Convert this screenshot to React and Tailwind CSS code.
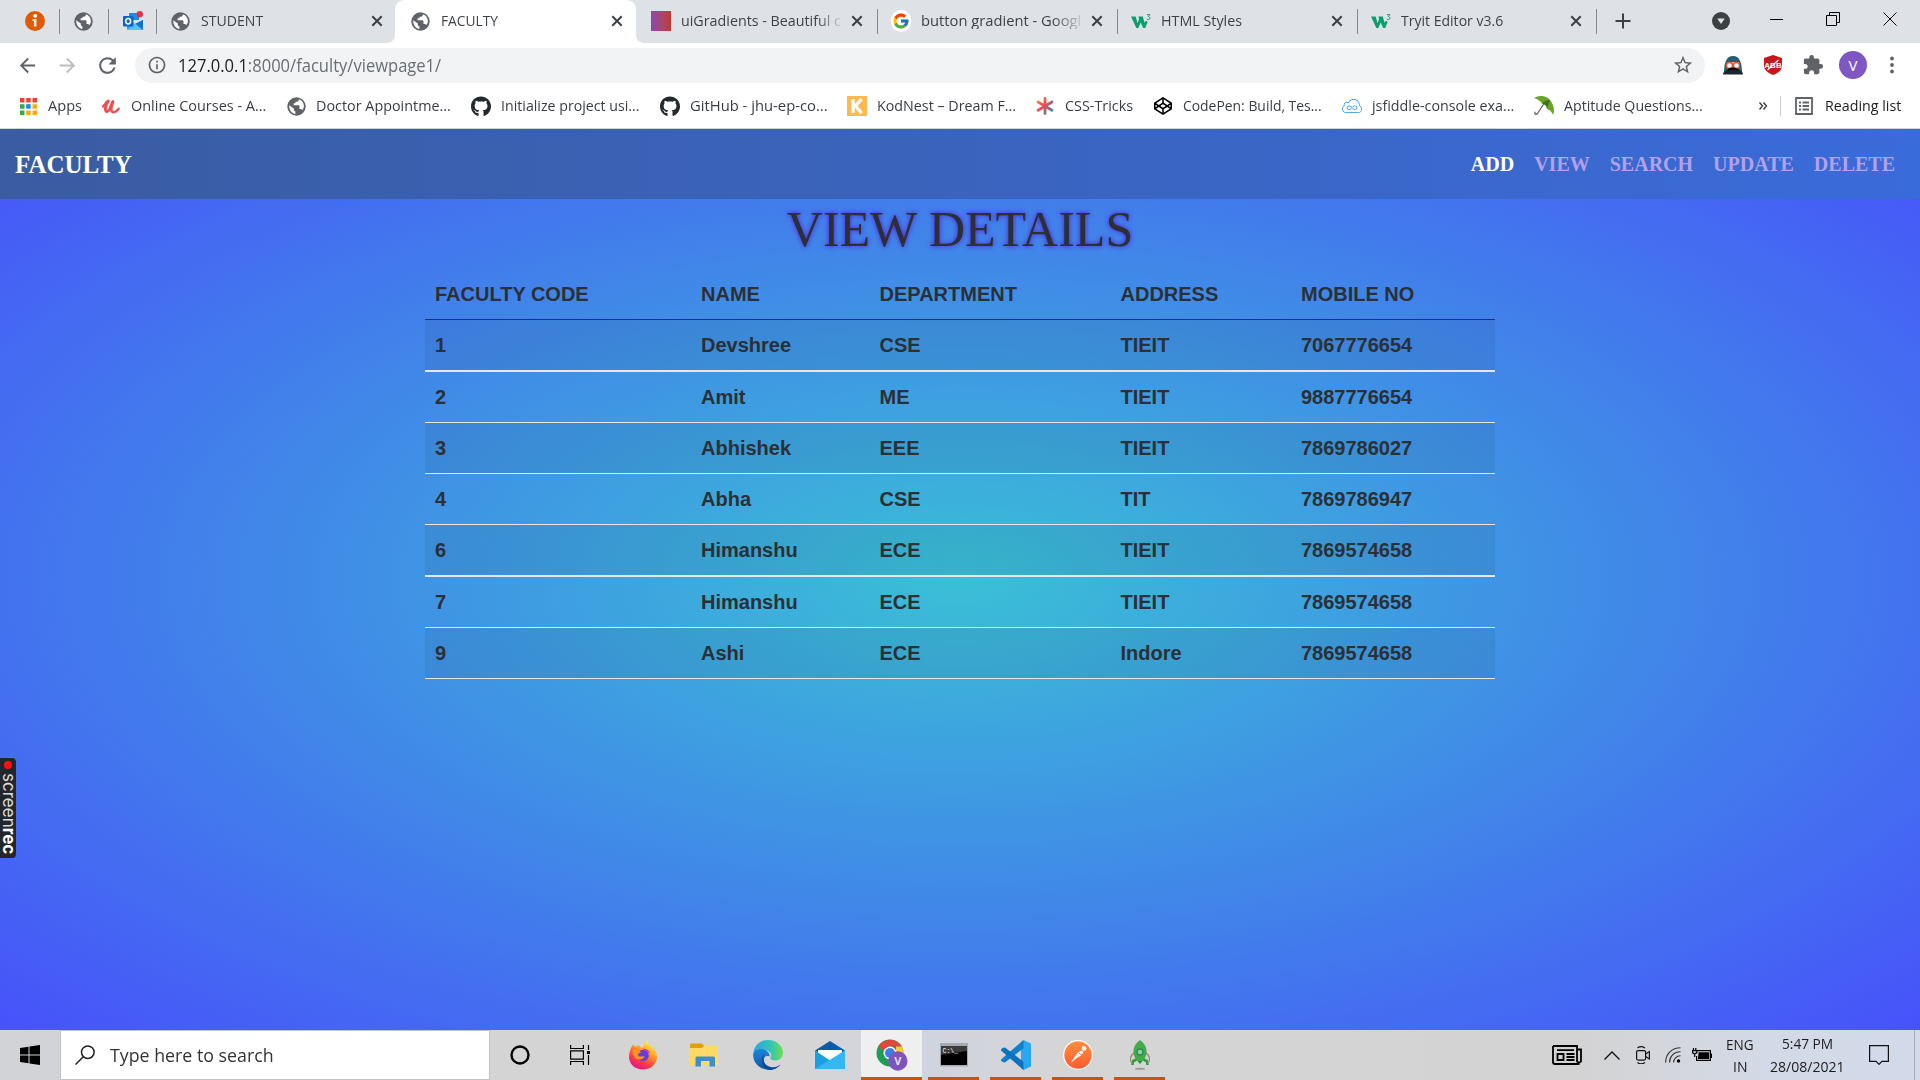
import React, { useLayoutEffect, useRef } from "react";
import { MdExtension, MdStarBorder, MdRefresh, MdArrowBack, MdArrowForward, MdInfoOutline } from "react-icons/md";
import { FcGoogle } from "react-icons/fc";
import { FaGithub, FaCodepen } from "react-icons/fa";
import { SiJsfiddle } from "react-icons/si";

const UI = "font-['Segoe_UI','Open_Sans','Noto_Sans',sans-serif]";

/* One line of text, condensed or widened to fill the width of its box. */
function Fit({ className = "", children }) {
  const outer = useRef(null);
  const inner = useRef(null);
  useLayoutEffect(() => {
    const s = outer.current.clientWidth / inner.current.offsetWidth;
    inner.current.style.transform = `scaleX(${s})`;
  }, []);
  return (
    <span ref={outer} className={`block shrink-0 whitespace-nowrap ${className}`}>
      <span ref={inner} className="inline-block origin-left">{children}</span>
    </span>
  );
}

const Globe = ({ className = "" }) => (
  <svg viewBox="0 0 21 21" className={`h-[21px] w-[21px] shrink-0 ${className}`}>
    <circle cx="10.500" cy="10.500" r="9.200" fill="#5f6368" />
    <path d="M3.200 9.300l4.600 3.200v1.200c0 .9.700 1.500 1.600 1.500v2.900C5.800 17.500 3 14.200 3.200 9.300z" fill="#fff" />
    <path d="M12.800 3.200c.2 1.700-.6 2.500-2 2.500H9.500v1.600H7.600v2h4.700c.8 0 1.200.5 1.200 1.200v2.600h1c.8 0 1.400.5 1.600 1.200 1.200-1.200 1.800-2.500 1.800-4.200 0-3.200-2-5.900-5.100-6.900z" fill="#fff" />
  </svg>
);
const Sep = ({ className = "" }) => <i className={`block h-[25px] w-px shrink-0 bg-[#85888c] ${className}`} />;

const Close = ({ className = "" }) => (
  <svg viewBox="0 0 12 12" className={`h-3 w-3 shrink-0 ${className}`} fill="none" stroke="#3c4043" strokeWidth="2">
    <path d="M1.3 1.3l9.4 9.4M10.7 1.3l-9.4 9.4" />
  </svg>
);

const W3 = ({ className = "" }) => (
  <svg viewBox="0 0 20 20" className={`h-5 w-5 shrink-0 ${className}`} fill="none">
    <path d="M0 5.500h4.600l2 6.500 1.500-4-.8-2.500h4.400l2 6.500 1-2.200 2 1.200L14.200 17h-2L9.700 11.500 7.300 17h-2z" fill="#0aa06e" />
    <path d="M16 3.600h2.900l-1.500 1.900c2 .2 2 3.100-.1 3.100-.7 0-1.200-.3-1.500-.8" stroke="#0aa06e" strokeWidth="1" />
  </svg>
);

const Info = ({ className = "" }) => (
  <svg viewBox="0 0 20 20" className={`h-5 w-5 shrink-0 ${className}`}>
    <circle cx="10" cy="10" r="10" fill="#dd5a06" />
    <circle cx="10.200" cy="4.800" r="1.900" fill="#fff" />
    <path d="M7.500 8h4v7.600h-2.600v-5.700H7.500z" fill="#fbe3d0" />
  </svg>
);

const Outlook = ({ className = "" }) => (
  <svg viewBox="0 0 20 20" className={`h-5 w-5 shrink-0 ${className}`}>
    <path d="M6 2h10v7H6z" fill="#1490df" />
    <path d="M4 9l8 4 8-4v9a1 1 0 0 1-1 1H5a1 1 0 0 1-1-1z" fill="#28a8ea" />
    <path d="M12 13l8-4v10h-5z" fill="#1273c5" />
    <path d="M4 19l8-6.500 8 6.500z" fill="#50c8f5" />
    <rect y="5" width="10.500" height="10.500" rx="1" fill="#0a66c2" />
    <ellipse cx="5.200" cy="10.300" rx="2.400" ry="2.700" fill="none" stroke="#fff" strokeWidth="1.500" />
    <circle cx="16.800" cy="3.300" r="3.300" fill="#dc3545" />
  </svg>
);

function TabStrip() {
  return (
    <div className="flex h-[43px] items-center bg-[#dee1e6] pb-px text-[15px] leading-[18px] text-[#3f4347]">
      <Info className="ml-[25px]" />
      <Sep className="ml-[14px]" />
      <Globe className="ml-[13px]" />
      <Sep className="ml-[14px]" />
      <Outlook className="ml-[14px]" />
      <Sep className="ml-[13px]" />
      <Globe className="ml-[13px]" />
      <Fit className="mb-[2px] ml-[10px] w-[62px]">STUDENT</Fit>
      <Close className="ml-[108px]" />
      <div className="-mb-px ml-[4px] flex h-[43px] items-end">
        <div className="h-[10px] w-[8px] bg-white"><div className="h-full w-full rounded-br-[8px] bg-[#dee1e6]" /></div>
        <div className="flex h-[43px] w-[241px] items-center rounded-t-[9px] bg-white pb-px">
          <Globe className="ml-[15px]" />
          <Fit className="mb-[2px] ml-[10px] w-[57px]">FACULTY</Fit>
          <Close className="ml-[113px]" />
        </div>
        <div className="h-[10px] w-[8px] bg-white"><div className="h-full w-full rounded-bl-[8px] bg-[#dee1e6]" /></div>
      </div>
      <i className="ml-[7px] block h-5 w-5 bg-gradient-to-r from-[#8e44ad] to-[#c0392b]" />
      <Fit className="mb-[2px] ml-[10px] w-[160px] [mask-image:linear-gradient(90deg,#000_85%,transparent_102%)]">uiGradients - Beautiful c</Fit>
      <Close className="ml-[10px]" />
      <Sep className="ml-[14px]" />
      <i className="ml-[13px] flex h-[22px] w-[20px] items-center justify-center rounded-full bg-white"><FcGoogle className="h-[18px] w-[18px]" /></i>
      <Fit className="mb-[2px] ml-[10px] w-[160px] [mask-image:linear-gradient(90deg,#000_82%,transparent_103%)]">button gradient - Googl</Fit>
      <Close className="ml-[10px]" />
      <Sep className="ml-[14px]" />
      <W3 className="ml-[13px]" />
      <Fit className="mb-[2px] ml-[10px] w-[81px]">HTML Styles</Fit>
      <Close className="ml-[89px]" />
      <Sep className="ml-[14px]" />
      <W3 className="ml-[13px]" />
      <Fit className="mb-[2px] ml-[10px] w-[102px]">Tryit Editor v3.6</Fit>
      <Close className="ml-[67px]" />
      <Sep className="ml-[14px]" />
      <svg viewBox="0 0 16 16" className="ml-[18px] h-4 w-4 shrink-0" stroke="#3c4043" strokeWidth="2"><path d="M8 .5v15M.5 8h15" /></svg>
      <svg viewBox="0 0 18 18" className="ml-[81px] h-[18px] w-[18px] shrink-0"><circle cx="9" cy="9" r="9" fill="#3c4043" /><path d="M5.300 6.500h7.400L9 12z" fill="#dee1e6" /></svg>
      <svg viewBox="0 0 128 14" className="mb-[5px] ml-[40px] h-[14px] w-[128px] shrink-0" fill="none" stroke="#000" strokeWidth="1">
        <path d="M0 7.500h13M56.500 3.500h10v10h-10zM59.500 3.500v-3h10v10h-3" />
        <path d="M113.500.5l13 13M126.500.5l-13 13" />
      </svg>
    </div>
  );
}

function AddressBar() {
  return (
    <div className="flex h-[44px] items-center bg-white pl-[16px]">
      <MdArrowBack className="h-[23px] w-[23px] text-[#5f6368]" />
      <MdArrowForward className="ml-[17px] h-[23px] w-[23px] text-[#bbbdbf]" />
      <MdRefresh className="ml-[16px] h-[25px] w-[25px] text-[#5f6368]" />
      <div className="ml-[15px] flex h-[35px] w-[1570px] items-center rounded-full bg-[#f1f3f4]">
        <MdInfoOutline className="ml-[12px] h-5 w-5 text-[#5f6368]" />
        <Fit className="ml-[11px] w-[263px] text-[17.500px] leading-6 text-[#6a6e73]"><span className="text-[#202124]">127.0.0.1</span>:8000/faculty/viewpage1/</Fit>
        <MdStarBorder className="ml-[1231px] h-[22px] w-[22px] text-[#5f6368]" />
      </div>
      <svg viewBox="0 0 20 20" className="ml-[18px] h-5 w-5 shrink-0">
        <path d="M1 19C1 8 3 1 10 1s9 7 9 18z" fill="#23606f" />
        <path d="M0 19.500c0-3 3-5.500 10-5.500s10 2.500 10 5.500z" fill="#1c2731" />
        <path d="M4 7h12v5H4z" fill="#e9b59b" />
        <circle cx="6.500" cy="10.500" r="3" fill="#fff" stroke="#e2553c" strokeWidth="1.400" />
        <circle cx="13.500" cy="10.500" r="3" fill="#fff" stroke="#e2553c" strokeWidth="1.400" />
        <path d="M5 15c2-2 8-2 10 0" stroke="#000" strokeWidth="1.800" fill="none" />
      </svg>
      <svg viewBox="0 0 20 20" className="ml-[20px] h-5 w-5 shrink-0">
        <path d="M10 0l9 3v8c0 4-4 7-9 9-5-2-9-5-9-9V3z" fill="#c8161d" />
        <text x="10" y="12.800" textAnchor="middle" fontSize="8" fontWeight="bold" fontFamily="Liberation Sans" fill="#fff">ABB</text>
        <path d="M4.500 15L15.500 5" stroke="#fff" strokeWidth="1.200" />
      </svg>
      <MdExtension className="ml-[19px] h-[22px] w-[22px] text-[#5f6368]" />
      <div className="ml-[15px] flex h-[28px] w-[28px] items-center justify-center rounded-full bg-[#7e57c2] text-[15px] text-white">V</div>
      <svg viewBox="0 0 4 18" className="ml-[23px] h-[18px] w-[4px] shrink-0" fill="#5f6368"><circle cx="2" cy="2.500" r="1.900" /><circle cx="2" cy="9" r="1.900" /><circle cx="2" cy="15.500" r="1.900" /></svg>
    </div>
  );
}

const AppsGrid = () => (
  <svg viewBox="0 0 17 17" className="h-[17px] w-[17px]">
    <path d="M0 0h4.500v4.500H0zM6.200 0h4.500v4.500H6.200zM12.500 0H17v4.500h-4.500z" fill="#ea4335" />
    <path d="M0 6.200h4.500v4.500H0zM0 12.500h4.500V17H0z" fill="#34a853" />
    <path d="M6.200 6.200h4.500v4.500H6.200z" fill="#1a87f0" />
    <path d="M6.200 12.500h4.500V17H6.200zM12.500 12.500H17V17h-4.500zM12.500 6.200H17v4.500h-4.500z" fill="#fbab09" />
  </svg>
);
const Udemy = () => (
  <svg viewBox="0 0 20 16" className="h-[15px] w-[18px]" fill="none" stroke="#ea5252" strokeLinecap="round">
    <path d="M7 2C5 5 3.500 8.500 3.800 11.500c.4 3 3.200 2.500 5.200-1.500L12 2.500" strokeWidth="3.300" />
    <path d="M1 8c1.500-1 3-3 4-5M12.300 3c-1.500 4-3 8-1.300 10.500 1.500 1.800 5 .5 7.500-3" strokeWidth="2.700" />
  </svg>
);
const KodNest = () => (
  <svg viewBox="0 0 20 20" className="h-5 w-5"><path d="M0 0h20v20H0z" fill="#fdb94e" /><path d="M6 3v14M14.500 3L8.500 10l6 7" fill="none" stroke="#fff" strokeWidth="3.400" /></svg>
);
const CssTricks = () => (
  <svg viewBox="0 0 18 18" className="h-[18px] w-[18px]" strokeWidth="2.8" strokeLinecap="round">
    <defs><linearGradient id="ct" x1="0" y1="0" x2="18" y2="14" gradientUnits="userSpaceOnUse"><stop offset=".1" stopColor="#f58a2c" /><stop offset=".5" stopColor="#ea4c5a" /><stop offset=".75" stopColor="#8b6a86" /><stop offset="1" stopColor="#22a7a0" /></linearGradient></defs>
    <path d="M9 1.500l.01 15M2 5l14 8.200M16 5L2 13.200" stroke="url(#ct)" />
  </svg>
);
const Umbrella = () => (
  <svg viewBox="0 0 20 20" className="h-5 w-5">
    <path d="M11 6L3.500 17.500c-1.500 2-3.500.5-2.200-1.800" fill="none" stroke="#666" strokeWidth="1.300" />
    <path d="M0 2C5-1 12-1 16 4s5 11 3 15c-1-3-3-5-6-6 0-3-2-5-5-5.500C6 4.500 3 3 0 2z" fill="#6aa52b" />
    <path d="M8 7.500C10 5 13 4 16 4c-1 3-2 6-3 9 0-3-2-5-5-5.500z" fill="#3d7415" />
  </svg>
);

const bookmarks = [
  { icon: <AppsGrid />, text: "Apps", gap: "ml-0", w: "w-[34px]" },
  { icon: <Udemy />, text: "Online Courses - A...", gap: "ml-[19px]", w: "w-[135px]" },
  { icon: <Globe />, text: "Doctor Appointme...", gap: "ml-[20px]", w: "w-[135px]" },
  { icon: <FaGithub className="h-[21px] w-[21px] text-[#24292e]" />, text: "Initialize project usi...", gap: "ml-[20px]", w: "w-[139px]" },
  { icon: <FaGithub className="h-[21px] w-[21px] text-[#24292e]" />, text: "GitHub - jhu-ep-co...", gap: "ml-[20px]", w: "w-[138px]" },
  { icon: <KodNest />, text: "KodNest – Dream F...", gap: "ml-[19px]", w: "w-[139px]" },
  { icon: <CssTricks />, text: "CSS-Tricks", gap: "ml-[19px]", w: "w-[68px]" },
  { icon: <FaCodepen className="h-[18px] w-[18px] text-black" />, text: "CodePen: Build, Tes...", gap: "ml-[20px]", w: "w-[139px]" },
  { icon: <SiJsfiddle className="h-5 w-5 text-[#1f8cf0]" />, text: "jsfiddle-console exa...", gap: "ml-[20px]", w: "w-[142px]" },
  { icon: <Umbrella />, text: "Aptitude Questions...", gap: "ml-[20px]", w: "w-[139px]" },
];

function BookmarksBar() {
  return (
    <div className="flex h-[42px] items-center border-b border-[#cfd2d6] bg-white pb-[3px] pl-[18px] text-[15px] leading-[18px] text-[#3a3d41]">
      {bookmarks.map((b) => (
        <div key={b.text} className={`flex shrink-0 items-center ${b.gap}`}>
          <span className="flex h-[22px] w-5 shrink-0 items-center justify-center">{b.icon}</span>
          <Fit className={`mb-[2px] ml-[10px] ${b.w}`}>{b.text}</Fit>
        </div>
      ))}
      <svg viewBox="0 0 8 8" className="ml-[56px] h-2 w-2 shrink-0" fill="none" stroke="#3c4043" strokeWidth="1.400"><path d="M.5.500L3.500 4l-3 3.500M4.500.500l3 3.500-3 3.500" /></svg>
      <i className="ml-[13px] block h-5 w-px shrink-0 bg-[#c9ccd0]" />
      <svg viewBox="0 0 18 18" className="ml-[14px] h-[18px] w-[18px] shrink-0" fill="none" stroke="#5f6368" strokeWidth="1.800"><path d="M1 1h16v16H1zM4 5.500h2M7.500 5.500H14M4 9h2M7.500 9H14M4 12.500h2M7.500 12.500H14" /></svg>
      <Fit className="mb-[2px] ml-[12px] w-[76px] text-[#202124]">Reading list</Fit>
    </div>
  );
}

const rows = [
  ["1", "Devshree", "CSE", "TIEIT", "7067776654"],
  ["2", "Amit", "ME", "TIEIT", "9887776654"],
  ["3", "Abhishek", "EEE", "TIEIT", "7869786027"],
  ["4", "Abha", "CSE", "TIT", "7869786947"],
  ["6", "Himanshu", "ECE", "TIEIT", "7869574658"],
  ["7", "Himanshu", "ECE", "TIEIT", "7869574658"],
  ["9", "Ashi", "ECE", "Indore", "7869574658"],
];
const GRID = "grid grid-cols-[266px_178.500px_241px_180.500px_1fr] *:px-[10px]";

function Page() {
  return (
    <div className="h-[901px] bg-[radial-gradient(ellipse_at_center,#3abfd6_0%,#4752fa_100%)] font-['Liberation_Serif',serif]">
      <nav className="flex h-[70px] items-center bg-gradient-to-r from-[#3a5ca2] to-[#3a6bda] pt-[2px] pl-[15px] font-bold text-white">
        <span className="mr-auto text-[25px]">FACULTY</span>
        <div className="mb-[2px] flex gap-[20px] pr-[25px] text-[20px] text-[#b3a1ea]">
          <span className="text-white">ADD</span>
          <span>VIEW</span>
          <span>SEARCH</span>
          <span>UPDATE</span>
          <span>DELETE</span>
        </div>
      </nav>
      <h1 className="h-[70px] text-center text-[50px] leading-[60px] text-[#2b3035] [text-shadow:0_0_5px_#5a10d8]">VIEW DETAILS</h1>
      <div className="mx-auto w-[1070px] font-['Liberation_Sans',sans-serif] text-[20px] leading-[30px] font-bold text-[#2b3035]">
        <div className={`${GRID} h-[51px] border-b border-[#263347] pt-[10px]`}>
          <span>FACULTY CODE</span><span>NAME</span><span>DEPARTMENT</span><span>ADDRESS</span><span>MOBILE NO</span>
        </div>
        {rows.map((r, i) => (
          <div key={r[0]} className={`${GRID} border-[#e9e4e6] py-[10px] ${i % 4 === 0 ? "border-b-2" : "border-b"} ${i % 2 === 0 ? "bg-black/[.06]" : ""}`}>
            {r.map((c, j) => <span key={j}>{c}</span>)}
          </div>
        ))}
      </div>
    </div>
  );
}

const Firefox = () => (
  <svg viewBox="0 0 30 30" className="h-[30px] w-[30px]">
    <defs>
      <linearGradient id="ff" x1=".8" y1=".1" x2=".3" y2="1"><stop stopColor="#fff044" /><stop offset=".35" stopColor="#ff9a20" /><stop offset=".7" stopColor="#ff3a4a" /><stop offset="1" stopColor="#e0128c" /></linearGradient>
    </defs>
    <path d="M3.500 7c.5-1 1-2 2-2.500.3 1 .7 1.800 1.500 2.500 1-1 2.500-1.500 4-1.500L14 8c2-1 2-5 5-7.500.5 3 3 4 4 6.500l1-1c2.500 2.500 5 6.500 5 11 0 7-6 12.500-14 12.500S1 24 1 17C1 13 2 10 3.500 7z" fill="url(#ff)" />
    <circle cx="15" cy="15.500" r="5.800" fill="#6a3bd6" />
    <path d="M5 10c3-2 6 0 8 2.500-2 .5-4 2-2.500 3.500 2 1.500 4-.5 6 .5-1 3-6 4-9 1.500C5 16 4 13 5 10z" fill="#ff9420" />
    <path d="M14 9c3-1 7 1 8 4l-3-1c-1-2-3-2.500-5-3z" fill="#b833c8" />
  </svg>
);
const Explorer = () => (
  <svg viewBox="0 0 28 24" className="h-[24px] w-[28px]">
    <path d="M0 1.500A1 1 0 0 1 1 .5h11l2 2.500v4H0z" fill="#e2a007" />
    <path d="M0 5h12l2-2h12.500A1.500 1.500 0 0 1 28 4.500V22H0z" fill="#ffd866" />
    <path d="M5.500 23.500V15A1.500 1.500 0 0 1 7 13.500h16.500A1.500 1.500 0 0 1 25 15v8.500h-5.500V18h-8.500v5.500z" fill="#3a8fd0" />
  </svg>
);
const Edge = () => (
  <svg viewBox="0 0 30 30" className="ml-[2px] h-[30px] w-[30px]">
    <defs>
      <linearGradient id="eg" x1="0" y1=".3" x2="1" y2=".3"><stop stopColor="#2aa5e0" /><stop offset=".6" stopColor="#35c5b5" /><stop offset="1" stopColor="#6ae04c" /></linearGradient>
      <linearGradient id="eb" x1="0" y1="0" x2="0" y2="1"><stop stopColor="#1b86d8" /><stop offset="1" stopColor="#1155a8" /></linearGradient>
    </defs>
    <path d="M.5 12C2 4 8 0 15 0c9 0 15 6 15 13 0 5-4 7.500-8 7.500-3.500 0-5.500-1.500-4.500-3 2-2.500 0-6.500-4-7C8 9.500 2 12 .2 16z" fill="url(#eg)" />
    <path d="M.2 15C1 10 6 8 11 9.500c3.500 1 6 4 5.500 7C8 13.500 9 28 19 29.400 9 31.500 0 24 .2 15z" fill="url(#eb)" />
    <path d="M12 13.500c-3 4-2 12 6 13.500 4 .7 7-.7 9.500-2.500-3 4-7 5.500-11 5.500C9 29 6 18 12 13.500z" fill="#0c479c" />
  </svg>
);
const Mail = () => (
  <svg viewBox="0 0 30 28" className="h-[28px] w-[30px]">
    <path d="M0 9.500L15 0l15 9.500-3 2H3z" fill="#0a5cab" />
    <path d="M3 9h24v8l-12 5L3 17z" fill="#fff" />
    <path d="M0 9.500l15 10 15-10V28H0z" fill="#1b9fe4" />
    <path d="M30 9.500V28H0z" fill="#35b8f1" />
  </svg>
);
const ChromeIcon = () => (
  <svg viewBox="0 0 32 32" className="h-[32px] w-[32px]">
    <circle cx="14" cy="14" r="13.500" fill="#1e9e55" />
    <path d="M2.300 7.500A13.500 13.500 0 0 1 25.700 7.500H14a6.500 6.500 0 0 0-6 4.500z" fill="#dd4a3c" />
    <path d="M25.700 7.500A13.500 13.500 0 0 1 14 27.500l6-11V7.500z" fill="#fcc934" />
    <circle cx="14" cy="14" r="6.500" fill="#fff" /><circle cx="14" cy="14" r="5" fill="#3d7de8" />
    <circle cx="21.800" cy="22" r="9.700" fill="#7d55bd" />
    <text x="21.800" y="26" textAnchor="middle" fontSize="11" fontWeight="bold" fontFamily="Open Sans" fill="#e6dcf5">V</text>
  </svg>
);
const Terminal = () => (
  <svg viewBox="0 0 28 24" className="h-[24px] w-[28px]">
    <path d="M0 0h28v23.500H0z" fill="#a6aaae" /><path d="M1 3h26v19H1z" fill="#000" /><path d="M1 3h26v5L1 12z" fill="#3b3b3b" />
    <text x="2.500" y="9.500" fontSize="6.500" fontFamily="Liberation Mono" fill="#fff">C:\_</text>
  </svg>
);
const VSCode = () => (
  <svg viewBox="0 0 30 30" className="h-[30px] w-[30px]">
    <path d="M22.500 0L30 3.500v23L22.500 30 20 28V2z" fill="#29a8f2" />
    <path d="M22.500 0v8.200L4 22.500 1.500 22 0 20.500v-1z" fill="#1080c8" />
    <path d="M22.500 30v-8.200L4 7.500 1.500 8 0 9.500v1z" fill="#0b72bb" />
  </svg>
);
const Postman = () => (
  <svg viewBox="0 0 30 30" className="h-[30px] w-[30px]">
    <defs><linearGradient id="pm" x1="0" y1="0" x2="0" y2="1"><stop stopColor="#ff9040" /><stop offset="1" stopColor="#ff5a30" /></linearGradient></defs>
    <circle cx="15" cy="15" r="14.300" fill="url(#pm)" stroke="#fff" strokeWidth="1.200" />
    <circle cx="21" cy="8.500" r="2.300" fill="#fff" />
    <path d="M18.500 10.500l2 1.500-3 4-2.500 1-7.500 6 5-7.500 2-2.500z" fill="#fff" />
    <path d="M16 13l3 2.500" stroke="#ff6f35" strokeWidth="1" />
  </svg>
);
const Rocket = () => (
  <svg viewBox="0 0 24 30" className="h-[30px] w-[24px]">
    <path d="M6 13c-4 3-4 6-3 9M18 13c4 3 4 6 3 9" fill="none" stroke="#a08068" strokeWidth="1.200" />
    <path d="M12 0c5 4 7 8 6.500 14L16 21H8l-2.500-7C5 8 7 4 12 0z" fill="#45aa48" />
    <path d="M4.500 25c0-4 1-5 3.500-4.500M19.500 25c0-4-1-5-3.500-4.500" fill="none" stroke="#2e9c42" strokeWidth="2.600" />
    <circle cx="12" cy="12" r="3" fill="#8ed0a8" stroke="#2c8a54" strokeWidth="1.300" />
    <path d="M9.500 21h5L12 24z" fill="#2e8c38" /><ellipse cx="12" cy="28.800" rx="5" ry="1" fill="#999" />
  </svg>
);

const tasks = [
  { icon: <ChromeIcon />, box: "w-[61px] bg-[#efefef]" },
  { icon: <Terminal />, box: "ml-[6px] w-[51px]" },
  { icon: <VSCode />, box: "ml-[11px] w-[51px]" },
  { icon: <Postman />, box: "ml-[11px] w-[51px]" },
  { icon: <Rocket />, box: "ml-[11px] w-[51px]" },
];

function Taskbar() {
  return (
    <div className="flex h-[50px] items-center bg-[linear-gradient(90deg,#d1d3d7_0%,#d4d4d4_26%,#d5d5d6_42%,#d0d4df_48%,#d5d5d6_55%,#d3d3d3_82%,#d3d9e6_92%,#d2daea_100%)] text-black">
      <svg viewBox="0 0 20 20" className="ml-[20px] h-5 w-5 shrink-0"><path d="M0 3l8.500-1.300v7.800H0zM9.500 1.500L20 0v9.500H9.500zM0 10.500h8.500v7.800L0 17zM9.500 10.500H20V20L9.500 18.500z" /></svg>
      <div className="ml-[20px] flex h-[50px] w-[430px] items-center border border-[#c3c3c5] bg-white">
        <svg viewBox="0 0 20 20" className="ml-[14px] h-5 w-5 shrink-0" fill="none" stroke="#222" strokeWidth="1.500"><circle cx="12.800" cy="7.200" r="6.300" /><path d="M8.300 11.700L.5 19.500" /></svg>
        <Fit className="ml-[15px] w-[164px] text-[18.750px] leading-6 text-[#333]">Type here to search</Fit>
      </div>
      <svg viewBox="0 0 20 20" className="ml-[20px] h-5 w-5 shrink-0"><circle cx="10" cy="10" r="8.500" fill="none" stroke="#000" strokeWidth="2.400" /></svg>
      <svg viewBox="0 0 20 20" className="ml-[40px] h-5 w-5 shrink-0" fill="none" stroke="#000" strokeWidth="1.200">
        <path d="M.6 0v3.500h12.800V0M.6 20v-3.500h12.800V20M.6 5.800h12.800v8.400H.6zM18.500 0v5M18.500 10v10" /><path d="M17 6h3v3h-3z" fill="#000" stroke="none" />
      </svg>
      <div className="ml-[38px] flex w-[217px] items-center justify-between"><Firefox /><Explorer /><Edge /><Mail /></div>
      <div className="ml-[16px] flex">
        {tasks.map((t, i) => (
          <div key={i} className={`flex h-[50px] items-center justify-center border-b-[3px] border-[#c9520f] pt-[3px] ${t.box}`}>{t.icon}</div>
        ))}
      </div>
      <svg viewBox="0 0 30 20" className="ml-[387px] h-5 w-[30px] shrink-0" fill="none" stroke="#000" strokeWidth="1.800">
        <path d="M1 1h24v15.500a2.500 2.500 0 0 0 4 0V4.500h-4M1 1v16a2 2 0 0 0 2 2h24.500M5 5.200h17M14.500 9h8M14.500 12h8M14.500 15h8M5.500 9h6v6h-6z" />
      </svg>
      <svg viewBox="0 0 16 9" className="ml-[22px] h-[9px] w-4 shrink-0" fill="none" stroke="#111" strokeWidth="1.300"><path d="M.5 8.500L8 1l7.500 7.500" /></svg>
      <svg viewBox="0 0 14 18" className="ml-[16px] h-[18px] w-[14px] shrink-0" fill="none" stroke="#111" strokeWidth="1.200"><rect x=".6" y="4.600" width="9" height="9.500" rx="1.500" /><path d="M9.600 8l3.800-2.500v7.500L9.600 10.500M1.500 2c2-1.600 5-1.600 7.500 0M1.500 16.500c2 1.600 5 1.600 7.500 0" /></svg>
      <svg viewBox="0 0 16 16" className="ml-[15px] h-4 w-4 shrink-0" fill="none" stroke="#333" strokeWidth="1.100"><path d="M.6 15.500C.6 7 7 .8 15.500.8M4.500 15.500C4.500 9.500 9 4.800 15.500 4.800M8.500 15.500c0-3.500 3-6.800 7-6.800" /><circle cx="13.500" cy="14" r="1.700" fill="#000" stroke="none" /></svg>
      <svg viewBox="0 0 20 14" className="ml-[11px] h-[14px] w-5 shrink-0" fill="none" stroke="#000" strokeWidth="1.200"><path d="M5 2.600h13.400v9.800H4.600V8M18.600 6h1v3.500h-1" /><path d="M6.500 4.200h10.600v6.800H6z" fill="#000" stroke="none" /><path d="M1.500 0v2.500M3.800 0v2.500M.5 2.600h4.300v2.200L2.700 6 .6 4.800zM2.700 6v3" /></svg>
      <div className="ml-[14px] flex h-[50px] w-[28px] flex-col items-center pt-[3px] text-[15px] leading-[22px] text-[#1c1c1c]"><Fit className="w-[28px]">ENG</Fit><Fit className="w-[14px]">IN</Fit></div>
      <div className="ml-[16px] flex h-[50px] w-[75px] flex-col items-center pt-[2px] text-[15px] leading-[23px] text-[#1c1c1c]"><Fit className="w-[51px]">5:47 PM</Fit><Fit className="w-[75px]">28/08/2021</Fit></div>
      <svg viewBox="0 0 20 20" className="ml-[24px] h-5 w-5 shrink-0" fill="none" stroke="#111" strokeWidth="1.200"><path d="M.6.6h18.800v15.800h-6.500L10 19.300l-2.900-2.900H.6z" /></svg>
      <i className="ml-[25px] block h-[50px] w-px bg-[#a9adb5]" />
    </div>
  );
}

export default function App() {
  return (
    <div className={`relative h-[1080px] w-[1920px] overflow-hidden ${UI}`}>
      <TabStrip />
      <AddressBar />
      <BookmarksBar />
      <Page />
      <Taskbar />
      <div className="absolute top-[758px] left-0 flex h-[100px] w-4 items-center gap-[4px] rounded-r-[4px] bg-[#23272c] pt-[3px] font-['Inter',sans-serif] text-[17px] leading-4 text-[#d8dadc] [writing-mode:vertical-rl]">
        <i className="block h-2 w-2 shrink-0 rounded-full bg-[#ff1010]" />
        <span className="translate-x-px">screen<b className="text-white">rec</b></span>
      </div>
    </div>
  );
}
